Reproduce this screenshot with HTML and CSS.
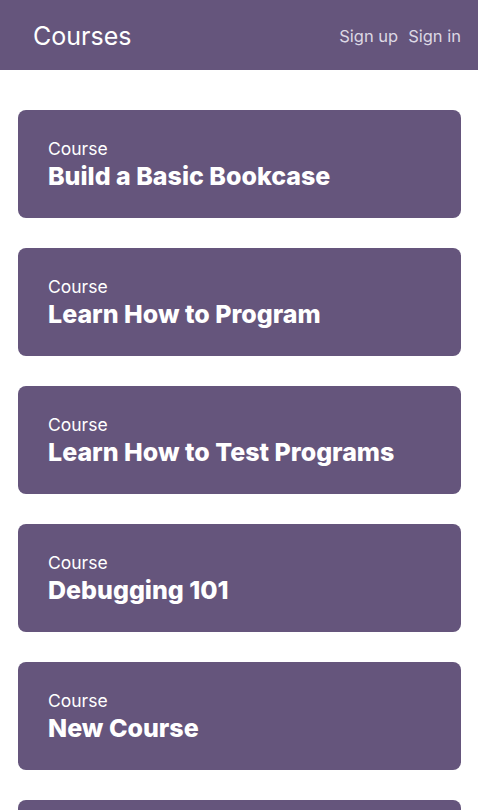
FILE: index.html
```html
<!DOCTYPE html>
<html>
<head>
<meta charset="utf-8">
<link rel="stylesheet" href="styles.css">
</head>
<body>
<header class="topbar">
  <div class="brand">Courses</div>
  <nav class="auth">
    <a href="#">Sign up</a>
    <a href="#">Sign in</a>
  </nav>
</header>
<main class="list">
  <a class="card" href="#"><span class="label">Course</span><span class="title">Build a Basic Bookcase</span></a>
  <a class="card" href="#"><span class="label">Course</span><span class="title">Learn How to Program</span></a>
  <a class="card" href="#"><span class="label">Course</span><span class="title">Learn How to Test Programs</span></a>
  <a class="card" href="#"><span class="label">Course</span><span class="title">Debugging 101</span></a>
  <a class="card" href="#"><span class="label">Course</span><span class="title">New Course</span></a>
  <a class="card" href="#"><span class="label">Course</span><span class="title">Another Course</span></a>
</main>
</body>
</html>
```
FILE: styles.css
```css
html, body { margin: 0; padding: 0; }
body {
  font-family: Inter, "Open Sans", sans-serif;
  background: #fff;
  overflow: hidden;
  height: 810px;
}
.topbar {
  height: 70px;
  box-sizing: border-box;
  background: #65557c;
  display: flex;
  align-items: center;
  justify-content: space-between;
  padding: 2px 17px 0 33px;
}
.brand {
  color: #fff;
  font-size: 25px;
  font-weight: 400;
}
.auth { display: flex; gap: 10px; }
.auth a {
  color: #ddd8e4;
  text-decoration: none;
  font-size: 16.5px;
}
.list {
  display: flex;
  flex-direction: column;
  gap: 30px;
  padding: 40px 17px 0 18px;
}
.card {
  display: flex;
  flex-direction: column;
  justify-content: center;
  height: 108px;
  box-sizing: border-box;
  padding: 2px 30px 0;
  background: #65557c;
  border-radius: 8px;
  text-decoration: none;
  color: #fff;
  flex-shrink: 0;
}
.label { font-size: 17.5px; line-height: 22px; }
.title { font-size: 25px; font-weight: 800; line-height: 32px; }
```
